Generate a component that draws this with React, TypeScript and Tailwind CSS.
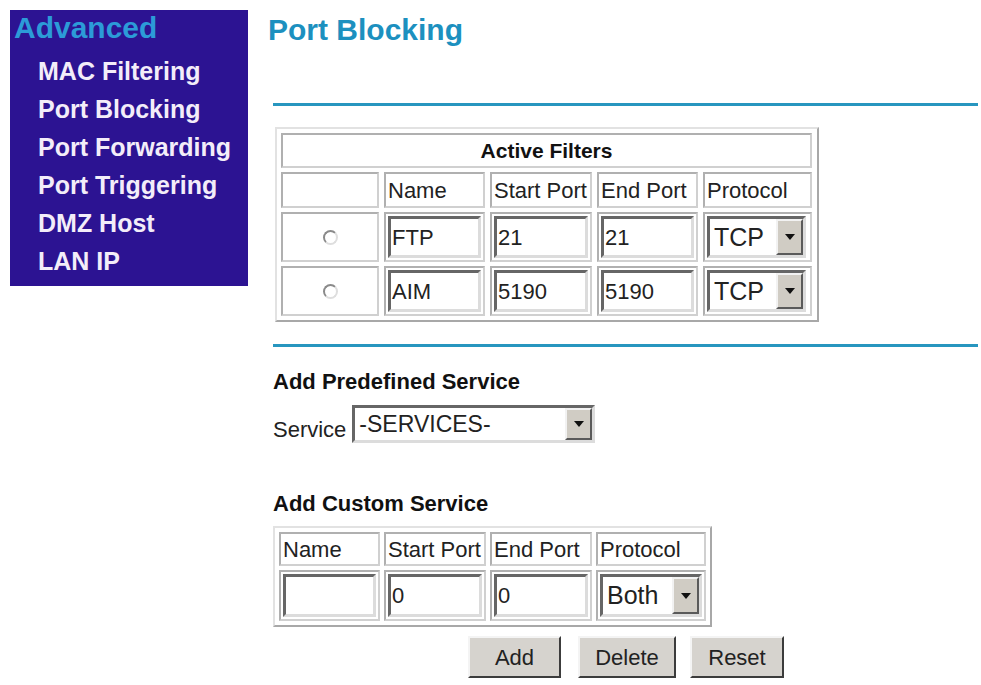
import type { ReactNode } from "react";

const menu = ["MAC Filtering", "Port Blocking", "Port Forwarding", "Port Triggering", "DMZ Host", "LAN IP"];

const filters = [
  { name: "FTP", start: "21", end: "21", protocol: "TCP" },
  { name: "AIM", start: "5190", end: "5190", protocol: "TCP" },
];

// classic grey bevels
const cell = "border-2 border-[#d0d0d0] border-t-[#b0b0b0] border-l-[#b0b0b0] bg-white";
const inset = "border-[3px] border-t-[#666] border-l-[#666] border-b-[#dcdcdc] border-r-[#dcdcdc] bg-white";

function Cell({ children, className = "" }: { children?: ReactNode; className?: string }) {
  return <div className={[cell, "flex items-center", className].join(" ")}>{children}</div>;
}

function TextBox({ value, className = "" }: { value: string; className?: string }) {
  return (
    <div className={[inset, "flex h-full items-center pl-[1px] text-[22px] text-[#222]", className].join(" ")}>
      {value}
    </div>
  );
}

function Arrow() {
  return (
    <div className="flex h-full w-[27px] items-center justify-center border-2 border-t-[#f2f2f2] border-l-[#f2f2f2] border-b-[#5a5a5a] border-r-[#5a5a5a] bg-[#d0ccc4]">
      <svg width="10" height="6" viewBox="0 0 10 6">
        <path d="M0 0h10L5 6z" fill="#111" />
      </svg>
    </div>
  );
}

function Dropdown({ value, className = "", textClass = "text-[25px]" }: { value: string; className?: string; textClass?: string }) {
  return (
    <div className={[inset, "flex h-full items-center", className].join(" ")}>
      <span className={["flex-1 pl-[4px] leading-none text-[#222]", textClass].join(" ")}>{value}</span>
      <Arrow />
    </div>
  );
}

function Radio() {
  return (
    <span className="block h-[15px] w-[15px] rounded-full border-2 border-t-[#8a8a8a] border-l-[#8a8a8a] border-b-[#dedede] border-r-[#dedede] bg-white" />
  );
}

function Button({ label, className = "" }: { label: string; className?: string }) {
  return (
    <button
      className={[
        "h-[42px] border-2 border-t-[#f4f4f4] border-l-[#f4f4f4] border-b-[#3c3c3c] border-r-[#3c3c3c] bg-[#d6d3ce] text-[22px] text-[#222]",
        className,
      ].join(" ")}
    >
      {label}
    </button>
  );
}

export default function App() {
  return (
    <div className="flex min-h-[685px] items-start bg-white pl-[10px] pt-[10px] font-['Liberation_Sans',Arial,sans-serif]">
      <nav className="h-[276px] w-[238px] bg-[#2c1392] pl-[4px] pt-[3px]">
        <p className="text-[30px] font-bold leading-[30px] text-[#2c9bd8]">Advanced</p>
        <ul className="mt-[9px] pl-[24px]">
          {menu.map((m) => (
            <li key={m} className="text-[25px] font-bold leading-[38px] text-[#f3edf9]">
              {m}
            </li>
          ))}
        </ul>
      </nav>

      <main className="ml-[20px] flex w-[710px] flex-col pt-[5px]">
        <h1 className="text-[30px] font-bold leading-[30px] text-[#1c90bf]">Port Blocking</h1>

        <div className="ml-[5px] mt-[58px] h-[3px] bg-[#2796bf]" />

        {/* active filters */}
        <div className="ml-[7px] mt-[21px] grid w-[544px] grid-cols-[98px_101px_102px_101px_109px] grid-rows-[35px_36px_50px_50px] gap-x-[5px] gap-y-[4px] border-2 border-t-[#e2e2e2] border-l-[#e2e2e2] border-b-[#a8a8a8] border-r-[#a8a8a8] p-[4px]">
          <Cell className="col-span-5 justify-center text-[21px] font-bold text-[#111]">Active Filters</Cell>
          <Cell />
          {["Name", "Start Port", "End Port", "Protocol"].map((h) => (
            <Cell key={h} className="pl-[2px] text-[22px] text-[#222]">
              {h}
            </Cell>
          ))}
          {filters.map((f) => (
            <div key={f.name} className="contents">
              <Cell className="justify-center">
                <Radio />
              </Cell>
              <Cell className="p-[2px]">
                <TextBox value={f.name} className="w-full" />
              </Cell>
              <Cell className="p-[2px]">
                <TextBox value={f.start} className="w-full" />
              </Cell>
              <Cell className="p-[2px]">
                <TextBox value={f.end} className="w-full" />
              </Cell>
              <Cell className="p-[2px]">
                <Dropdown value={f.protocol} className="w-[99px]" />
              </Cell>
            </div>
          ))}
        </div>

        <div className="ml-[5px] mt-[22px] h-[3px] bg-[#2796bf]" />

        <h2 className="ml-[5px] mt-[23px] text-[22px] font-bold leading-[24px] text-[#111]">Add Predefined Service</h2>
        <div className="ml-[5px] mt-[11px] flex h-[38px] items-end gap-[6px]">
          <span className="text-[22px] leading-[26px] text-[#222]">Service</span>
          <Dropdown value="-SERVICES-" className="w-[243px]" textClass="text-[23px]" />
        </div>

        <h2 className="ml-[5px] mt-[49px] text-[22px] font-bold leading-[24px] text-[#111]">Add Custom Service</h2>
        <div className="ml-[5px] mt-[10px] grid w-[439px] grid-cols-[101px_102px_102px_110px] grid-rows-[34px_51px] gap-[4px] border-2 border-t-[#e2e2e2] border-l-[#e2e2e2] border-b-[#a8a8a8] border-r-[#a8a8a8] p-[4px]">
          {["Name", "Start Port", "End Port", "Protocol"].map((h) => (
            <Cell key={h} className="pl-[2px] text-[22px] text-[#222]">
              {h}
            </Cell>
          ))}
          <Cell className="p-[2px]">
            <TextBox value="" className="w-full" />
          </Cell>
          <Cell className="p-[2px]">
            <TextBox value="0" className="w-full" />
          </Cell>
          <Cell className="p-[2px]">
            <TextBox value="0" className="w-full" />
          </Cell>
          <Cell className="p-[2px]">
            <Dropdown value="Both" className="w-[102px]" />
          </Cell>
        </div>

        <div className="ml-[200px] mt-[9px] flex">
          <Button label="Add" className="w-[93px]" />
          <Button label="Delete" className="ml-[17px] w-[98px]" />
          <Button label="Reset" className="ml-[14px] w-[94px]" />
        </div>
      </main>
    </div>
  );
}
